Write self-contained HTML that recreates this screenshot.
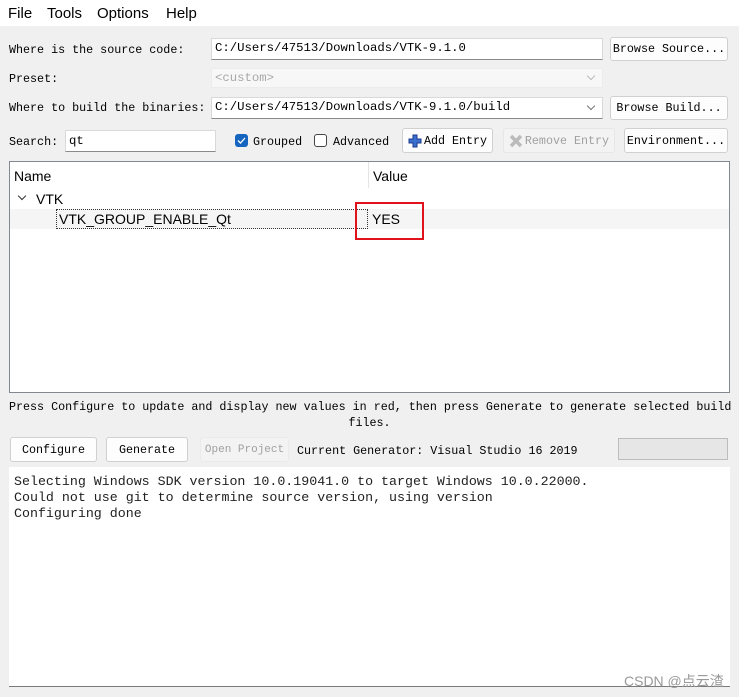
<!DOCTYPE html>
<html><head><meta charset="utf-8"><style>
*{box-sizing:border-box;margin:0;padding:0}
body{width:739px;height:697px;background:#f0f0f0;position:relative;overflow:hidden;font-family:"Liberation Mono",monospace;font-size:11.7px;color:#000}
.a{position:absolute;white-space:nowrap}
.menu{left:0;top:0;width:739px;height:26px;background:#fff;font-family:"Liberation Sans",sans-serif;font-size:15px}
.menu span{position:absolute;top:5px}
.in{background:#fff;border:1px solid #d9d9d9;border-bottom:1px solid #8a8a8a;line-height:19px;padding-left:3px;font-size:12.3px}
.btn{background:#fdfdfd;border:1px solid #d0d0d0;border-radius:3px;text-align:center;font-size:11.7px}
.chev{position:absolute;right:8px;top:6px;width:6px;height:6px;border-right:1px solid #777;border-bottom:1px solid #777;transform:rotate(45deg)}
.sans{font-family:"Liberation Sans",sans-serif;font-size:14px}
</style></head><body>
<div class="a menu"><span style="left:8px">File</span><span style="left:47px">Tools</span><span style="left:97px">Options</span><span style="left:166px">Help</span></div>

<div class="a" style="left:9px;top:43px">Where is the source code:</div>
<div class="a in" style="left:211px;top:38px;width:392px;height:22px">C:/Users/47513/Downloads/VTK-9.1.0</div>
<div class="a btn" style="left:610px;top:37px;width:118px;height:24px;line-height:22px">Browse Source...</div>

<div class="a" style="left:9px;top:72px">Preset:</div>
<div class="a in" style="left:211px;top:68px;width:392px;height:20px;background:#f7f7f7;border:1px solid #ececec;color:#a8a8a8;line-height:18px">&lt;custom&gt;<i class="chev" style="border-color:#bbb;top:4px"></i></div>

<div class="a" style="left:9px;top:101px">Where to build the binaries:</div>
<div class="a in" style="left:211px;top:97px;width:392px;height:22px;line-height:19px">C:/Users/47513/Downloads/VTK-9.1.0/build<i class="chev" style="top:5px"></i></div>
<div class="a btn" style="left:610px;top:96px;width:118px;height:24px;line-height:23px">Browse Build...</div>

<div class="a" style="left:9px;top:135px">Search:</div>
<div class="a in" style="left:65px;top:130px;width:151px;height:22px;line-height:21px">qt</div>
<div class="a" style="left:235px;top:134px;width:13px;height:13px;background:#1565c0;border-radius:3px"><svg width="13" height="13" style="position:absolute;left:0;top:0"><path d="M3 6.5l2.5 2.5 4.5-5" stroke="#fff" stroke-width="1.3" fill="none"/></svg></div>
<div class="a" style="left:253px;top:135px">Grouped</div>
<div class="a" style="left:314px;top:134px;width:13px;height:13px;border:1px solid #444;border-radius:3px;background:#fff"></div>
<div class="a" style="left:333px;top:135px">Advanced</div>
<div class="a btn" style="left:402px;top:128px;width:91px;height:25px;line-height:24px;padding-left:16px"><svg width="14" height="14" style="position:absolute;left:5px;top:5px"><path d="M5 1h4v4h4v4h-4v4h-4v-4h-4v-4h4z" fill="#3a6fd0" stroke="#1b3a8a" stroke-width="1"/></svg>Add Entry</div>
<div class="a btn" style="left:503px;top:128px;width:112px;height:25px;line-height:24px;padding-left:16px;color:#a0a0a0;background:#f3f3f3;border-color:#e6e6e6"><svg width="14" height="14" style="position:absolute;left:5px;top:5px"><path d="M2 2l10 10M12 2l-10 10" stroke="#bbb" stroke-width="3.5"/></svg>Remove Entry</div>
<div class="a btn" style="left:624px;top:128px;width:104px;height:25px;line-height:24px">Environment...</div>

<div class="a" style="left:9px;top:161px;width:721px;height:232px;background:#fff;border:1px solid #828790"></div>
<div class="a" style="left:368px;top:162px;width:1px;height:26px;background:#e5e5e5"></div>
<div class="a sans" style="left:14px;top:168px">Name</div>
<div class="a sans" style="left:373px;top:168px">Value</div>
<div class="a" style="left:19px;top:193px;width:6px;height:6px;border-right:1.3px solid #333;border-bottom:1.3px solid #333;transform:rotate(45deg)"></div>
<div class="a sans" style="left:36px;top:191px">VTK</div>
<div class="a" style="left:10px;top:209px;width:719px;height:20px;background:#f5f5f5"></div>
<div class="a" style="left:56px;top:209px;width:312px;height:20px;border:1px dotted #333"></div>
<div class="a sans" style="left:59px;top:211px">VTK_GROUP_ENABLE_Qt</div>
<div class="a sans" style="left:372px;top:211px">YES</div>
<div class="a" style="left:355px;top:202px;width:69px;height:38px;border:2px solid #e0121c"></div>

<div class="a" style="left:9px;top:400px;font-size:11.7px">Press Configure to update and display new values in red, then press Generate to generate selected build</div>
<div class="a" style="left:0;width:739px;text-align:center;top:416px;font-size:11.7px">files.</div>

<div class="a btn" style="left:10px;top:437px;width:87px;height:25px;line-height:25px">Configure</div>
<div class="a btn" style="left:106px;top:437px;width:82px;height:25px;line-height:25px">Generate</div>
<div class="a btn" style="left:200px;top:437px;width:89px;height:25px;line-height:25px;font-size:11px;color:#a0a0a0;background:#f3f3f3;border-color:#eaeaea">Open Project</div>
<div class="a" style="left:297px;top:444px">Current Generator: Visual Studio 16 2019</div>
<div class="a" style="left:618px;top:438px;width:110px;height:22px;background:#e6e6e6;border:1px solid #bcbcbc"></div>

<div class="a" style="left:9px;top:467px;width:721px;height:220px;background:#fff;border-bottom:1px solid #7a7a7a"></div>
<div class="a" style="left:14px;top:474px;font-size:13.3px;line-height:16px;color:#222">Selecting Windows SDK version 10.0.19041.0 to target Windows 10.0.22000.<br>Could not use git to determine source version, using version<br>Configuring done</div>
<div class="a" style="left:624px;top:671px;font-family:'Liberation Sans','Noto Sans CJK SC',sans-serif;font-size:14px;color:#999">CSDN @点云渣</div>
</body></html>
